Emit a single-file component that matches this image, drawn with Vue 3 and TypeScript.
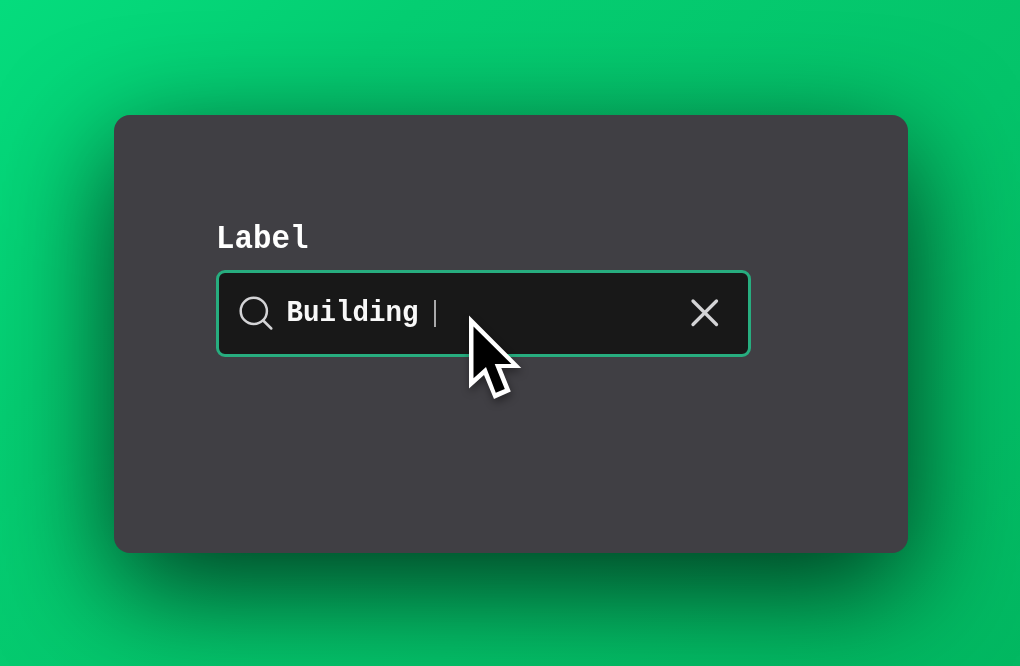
<script setup lang="ts">
import { ref } from 'vue'

const label = ref<string>('Label')
const query = ref<string>('Building')
</script>

<template>
  <main class="stage">
    <section class="card">
      <div class="field">
        <div class="label"><span class="text">{{ label }}</span></div>
        <div class="input">
          <svg class="search" viewBox="0 0 36 36" width="36" height="36">
            <circle cx="15.8" cy="15.9" r="13.1" />
            <path d="M25.2 25.5 33.3 33.5" />
          </svg>
          <span class="value text">{{ query }}</span>
          <span class="caret"></span>
          <svg class="clear" viewBox="0 0 30 30" width="30" height="30">
            <path d="M3 3 26.5 26.5M26.5 3 3 26.5" />
          </svg>
        </div>
      </div>
    </section>
    <svg class="pointer" viewBox="0 0 70 100" width="70" height="100">
      <path class="edge" d="M9 9.5V82.5L24 69 34 93 50.8 85.4 41.3 62H61.3Z" />
      <path class="body" d="M13.5 20.5V72.3L26 61 35.8 86.8 44.8 83 34.7 58H51.4Z" />
    </svg>
  </main>
</template>

<style>
body {
  margin: 0;
}
</style>

<style scoped>
.stage {
  position: relative;
  box-sizing: border-box;
  width: 1020px;
  height: 666px;
  padding: 115px 0 0 114px;
  overflow: hidden;
  background: linear-gradient(135deg, #05dc7d 0%, #05ce72 25%, #04c46a 65%, #02b861 100%);
  font-family: "Liberation Mono", monospace;
}

.card {
  box-sizing: border-box;
  width: 794px;
  height: 437.5px;
  padding: 101px 0 0 102px;
  border-radius: 16px;
  background: #403f44;
  box-shadow: 0 34px 116px rgba(0, 0, 0, 0.72);
}

.field {
  width: 535px;
}

.text {
  display: inline-block;
  font-weight: 700;
  white-space: pre;
  transform-origin: 0 50%;
}

.label {
  box-sizing: border-box;
  height: 54px;
  padding-top: 2px;
  color: #fff;
  font-size: 30.8px;
  line-height: 44px;
}

.label .text {
  transform: scaleY(1.06);
}

.input {
  display: flex;
  align-items: center;
  box-sizing: border-box;
  height: 87px;
  padding: 0 28px 1px 19px;
  border: 3px solid #27ad7f;
  border-radius: 9px;
  background: #181818;
}

.search,
.clear {
  flex: none;
  fill: none;
  stroke: #d4d4d6;
  stroke-linecap: round;
}

.search {
  stroke-width: 2.5;
}

.value {
  margin-left: 12.5px;
  color: #f8f8f8;
  font-size: 27.5px;
  line-height: 40px;
  transform: scaleY(1.08);
}

.caret {
  width: 2px;
  height: 27px;
  margin: 1px auto 0 15px;
  background: #a9a9aa;
}

.clear {
  stroke-width: 3.3;
}

.pointer {
  position: absolute;
  top: 306px;
  left: 460px;
  filter: drop-shadow(1px 4px 4px rgba(0, 0, 0, 0.4));
}

.edge {
  fill: #fff;
}

.body {
  fill: #000;
}
</style>
